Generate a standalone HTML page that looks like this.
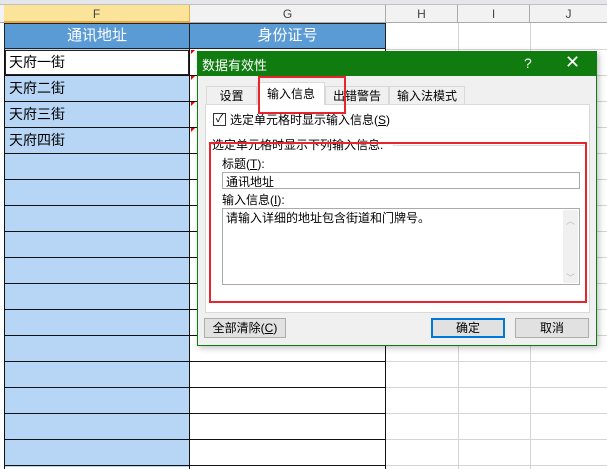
<html><head><style>
body{margin:0;width:607px;height:469px;overflow:hidden;background:#fff;font-family:"Liberation Sans","Noto Sans CJK SC",sans-serif;position:relative}
.a{position:absolute;box-sizing:border-box}
.t{font-size:13px;white-space:nowrap}
</style></head><body>
<div class="a" style="left:0;top:0;width:607px;height:5px;background:#e4e6ea;border-bottom:1px solid #c0c0c0"></div>
<div class="a" style="left:0;top:5px;width:607px;height:18px;background:#f2f2f2;border-bottom:1px solid #ababab"></div>
<div class="a" style="left:4px;top:5px;width:186px;height:18px;background:#fbe39a;border-right:1px solid #e0b050;border-bottom:2px solid #e2a84a;text-align:center;font-size:12px;line-height:18px;color:#444">F</div>
<div class="a" style="left:190px;top:5px;width:196px;height:18px;border-right:1px solid #ababab;text-align:center;font-size:12px;line-height:18px;color:#444">G</div>
<div class="a" style="left:386px;top:5px;width:72px;height:18px;border-right:1px solid #ababab;text-align:center;font-size:12px;line-height:18px;color:#444">H</div>
<div class="a" style="left:458px;top:5px;width:72px;height:18px;border-right:1px solid #ababab;text-align:center;font-size:12px;line-height:18px;color:#444">I</div>
<div class="a" style="left:530px;top:5px;width:77px;height:18px;text-align:center;font-size:12px;line-height:18px;color:#444">J</div>
<!-- grid lines right area -->
<svg class="a" style="left:0;top:23px" width="607" height="446">
<g stroke="#d4d4d4">
<line x1="458.5" y1="0" x2="458.5" y2="446"/><line x1="530.5" y1="0" x2="530.5" y2="446"/>
<line x1="386" y1="26.5" x2="607" y2="26.5"/><line x1="386" y1="52.5" x2="607" y2="52.5"/><line x1="386" y1="78.5" x2="607" y2="78.5"/><line x1="386" y1="104.5" x2="607" y2="104.5"/><line x1="386" y1="130.5" x2="607" y2="130.5"/><line x1="386" y1="156.5" x2="607" y2="156.5"/><line x1="386" y1="182.5" x2="607" y2="182.5"/><line x1="386" y1="208.5" x2="607" y2="208.5"/><line x1="386" y1="234.5" x2="607" y2="234.5"/><line x1="386" y1="260.5" x2="607" y2="260.5"/><line x1="386" y1="286.5" x2="607" y2="286.5"/><line x1="386" y1="312.5" x2="607" y2="312.5"/><line x1="386" y1="338.5" x2="607" y2="338.5"/><line x1="386" y1="364.5" x2="607" y2="364.5"/><line x1="386" y1="390.5" x2="607" y2="390.5"/><line x1="386" y1="416.5" x2="607" y2="416.5"/><line x1="386" y1="442.5" x2="607" y2="442.5"/>
</g></svg>
<div class="a" style="left:4px;top:23px;width:186px;height:26px;background:#5b9bd5;border:1px solid #222;color:#fff;text-align:center;font-size:15px;line-height:24px">通讯地址</div>
<div class="a" style="left:190px;top:23px;width:196px;height:26px;background:#5b9bd5;border:1px solid #222;border-left:none;color:#fff;text-align:center;font-size:15px;line-height:24px">身份证号</div>
<div class="a" style="left:4px;top:49px;width:186px;height:418px;background:#b7d6f6"></div>
<div class="a" style="left:5px;top:50px;width:184px;height:25px;background:#fff;border:1px solid #222"></div>
<svg class="a" style="left:0;top:49px" width="386" height="420">
<g stroke="#111">
<line x1="4.5" y1="0" x2="4.5" y2="420"/><line x1="189.5" y1="0" x2="189.5" y2="420"/><line x1="385.5" y1="0" x2="385.5" y2="420"/>
<line x1="4" y1="26.5" x2="386" y2="26.5"/><line x1="4" y1="52.5" x2="386" y2="52.5"/><line x1="4" y1="78.5" x2="386" y2="78.5"/><line x1="4" y1="104.5" x2="386" y2="104.5"/><line x1="4" y1="130.5" x2="386" y2="130.5"/><line x1="4" y1="156.5" x2="386" y2="156.5"/><line x1="4" y1="182.5" x2="386" y2="182.5"/><line x1="4" y1="208.5" x2="386" y2="208.5"/><line x1="4" y1="234.5" x2="386" y2="234.5"/><line x1="4" y1="260.5" x2="386" y2="260.5"/><line x1="4" y1="286.5" x2="386" y2="286.5"/><line x1="4" y1="312.5" x2="386" y2="312.5"/><line x1="4" y1="338.5" x2="386" y2="338.5"/><line x1="4" y1="364.5" x2="386" y2="364.5"/><line x1="4" y1="390.5" x2="386" y2="390.5"/><line x1="4" y1="416.5" x2="386" y2="416.5"/>
</g>
<g fill="#e00"><polygon points="191,1 195,1 191,5"/><polygon points="191,27 195,27 191,31"/><polygon points="191,53 195,53 191,57"/><polygon points="191,79 195,79 191,83"/></g>
</svg>
<div class="a t" style="left:9px;top:52px;font-size:14px;line-height:20px">天府一街</div>
<div class="a t" style="left:9px;top:78px;font-size:14px;line-height:20px">天府二街</div>
<div class="a t" style="left:9px;top:104px;font-size:14px;line-height:20px">天府三街</div>
<div class="a t" style="left:9px;top:130px;font-size:14px;line-height:20px">天府四街</div>
<!-- dialog -->
<div class="a" style="left:197px;top:51px;width:400px;height:295px;background:#f0f0f0;border:1px solid #107c10;box-shadow:2px 2px 6px rgba(0,0,0,.25)"></div>
<div class="a" style="left:197px;top:51px;width:400px;height:25px;background:#107c10"></div>
<div class="a t" style="left:202px;top:55px;color:#fff;font-size:13px">数据有效性</div>
<div class="a t" style="left:524px;top:55px;color:#fff;font-size:14px">?</div>
<div class="a t" style="left:565px;top:52px;color:#fff;font-size:18px">✕</div>
<div class="a" style="left:205px;top:104px;width:385px;height:209px;background:#fff;border:1px solid #d9d9d9"></div>
<div class="a t" style="left:206px;top:86px;width:51px;height:19px;border:1px solid #d9d9d9;border-bottom:none;text-align:center;line-height:19px;font-size:12px">设置</div>
<div class="a t" style="left:257px;top:82px;width:68px;height:23px;background:#fff;border:1px solid #d9d9d9;border-bottom:none;text-align:center;line-height:23px;font-size:12px">输入信息</div>
<div class="a t" style="left:325px;top:86px;width:64px;height:19px;border:1px solid #d9d9d9;border-bottom:none;text-align:center;line-height:19px;font-size:12px">出错警告</div>
<div class="a t" style="left:389px;top:86px;width:76px;height:19px;border:1px solid #d9d9d9;border-bottom:none;text-align:center;line-height:19px;font-size:12px">输入法模式</div>
<div class="a" style="left:258px;top:76px;width:88px;height:38px;border:2px solid #e8242c"></div>
<div class="a" style="left:213px;top:113px;width:13px;height:13px;border:1px solid #333;background:#fff;font-size:11px;line-height:11px;text-align:center">✓</div>
<div class="a t" style="left:230px;top:111px;font-size:12px">选定单元格时显示输入信息(<u>S</u>)</div>
<div class="a t" style="left:212px;top:136px;font-size:12px">选定单元格时显示下列输入信息:</div>
<div class="a" style="left:393px;top:145px;width:191px;height:1px;background:#ddd"></div>
<div class="a" style="left:209px;top:142px;width:378px;height:161px;border:2px solid #e8242c"></div>
<div class="a t" style="left:222px;top:155px;font-size:12px">标题(<u>T</u>):</div>
<div class="a" style="left:222px;top:172px;width:358px;height:17px;background:#fff;border:1px solid #aaa"></div>
<div class="a t" style="left:226px;top:173px;font-size:12px">通讯地址</div>
<div class="a t" style="left:222px;top:191px;font-size:12px">输入信息(<u>I</u>):</div>
<div class="a" style="left:222px;top:208px;width:358px;height:77px;background:#fff;border:1px solid #aaa"></div>
<div class="a" style="left:563px;top:210px;width:15px;height:73px;background:#f0f0f0;color:#bbb;font-size:9px;text-align:center"><div style="margin-top:4px">︿</div><div style="margin-top:44px">﹀</div></div>
<div class="a t" style="left:226px;top:209px;font-size:12px">请输入详细的地址包含街道和门牌号。</div>
<div class="a t" style="left:204px;top:318px;width:82px;height:20px;background:#e1e1e1;border:1px solid #adadad;text-align:center;line-height:18px;font-size:12px">全部清除(<u>C</u>)</div>
<div class="a t" style="left:431px;top:318px;width:74px;height:20px;background:#e1e1e1;border:2px solid #0078d7;text-align:center;line-height:16px;font-size:12px">确定</div>
<div class="a t" style="left:515px;top:318px;width:74px;height:20px;background:#e1e1e1;border:1px solid #adadad;text-align:center;line-height:18px;font-size:12px">取消</div>
</body></html>
